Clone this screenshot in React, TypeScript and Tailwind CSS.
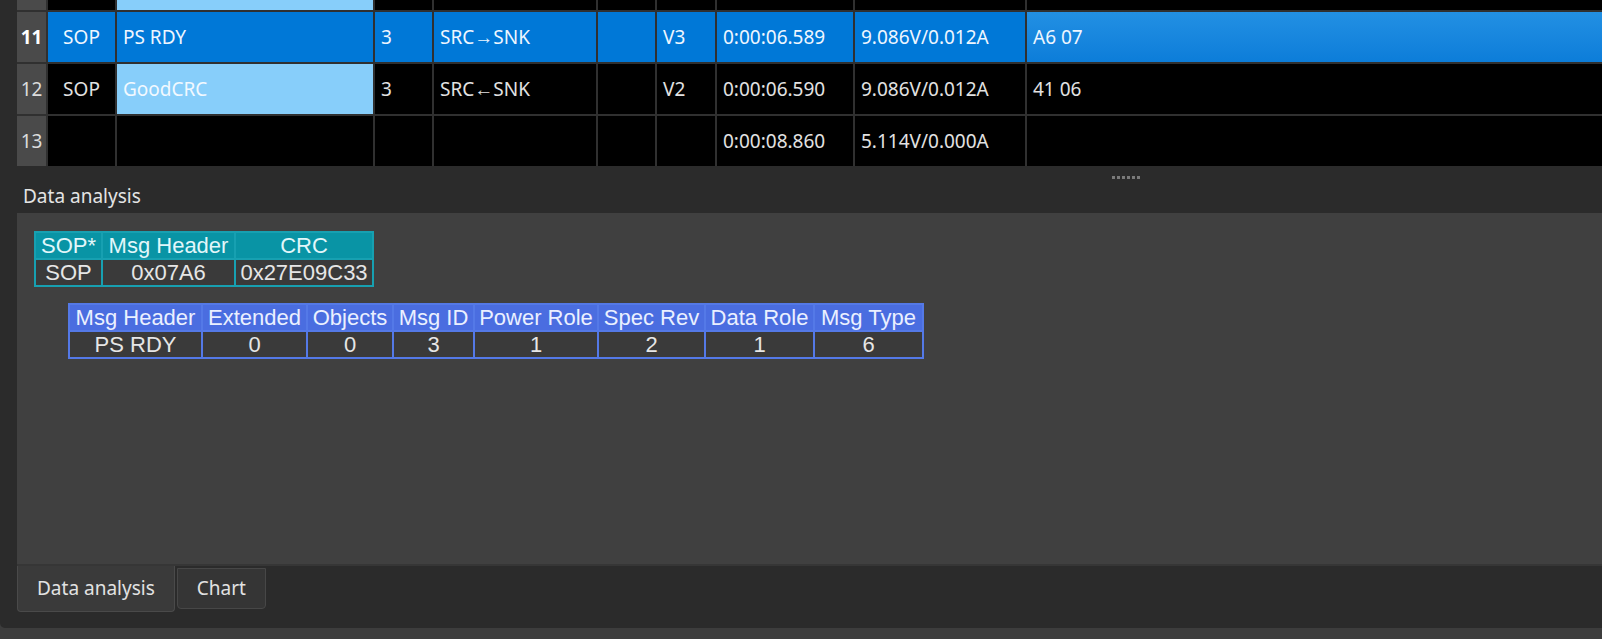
import React from 'react'

interface Col {
  w: string
  center?: boolean
}

const COLS: Col[] = [
  { w: 'w-[67px]', center: true },
  { w: 'w-[256px]' },
  { w: 'w-[57px]' },
  { w: 'w-[162px]' },
  { w: 'w-[57px]' },
  { w: 'w-[58px]' },
  { w: 'w-[136px]' },
  { w: 'w-[170px]' },
  { w: 'flex-1' },
]

interface Row {
  id: string
  cells: string[]
  selected?: boolean
}

const ROWS: Row[] = [
  {
    id: '11',
    selected: true,
    cells: ['SOP', 'PS RDY', '3', 'SRC→SNK', '', 'V3', '0:00:06.589', '9.086V/0.012A', 'A6 07'],
  },
  {
    id: '12',
    cells: ['SOP', 'GoodCRC', '3', 'SRC←SNK', '', 'V2', '0:00:06.590', '9.086V/0.012A', '41 06'],
  },
  {
    id: '13',
    cells: ['', '', '', '', '', '', '0:00:08.860', '5.114V/0.000A', ''],
  },
]

const HEADER_COLS = ['Msg Header', 'Extended', 'Objects', 'Msg ID', 'Power Role', 'Spec Rev', 'Data Role', 'Msg Type']
const HEADER_VALS = ['PS RDY', '0', '0', '3', '1', '2', '1', '6']

function cellBg(row: Row, i: number) {
  if (row.selected) {
    return i === 8 ? 'bg-gradient-to-b from-[#2290e3] to-[#0c7dd9]' : 'bg-[#0078d7]'
  }
  return i === 1 && row.cells[1] ? 'bg-[#87cefa]' : 'bg-black'
}

function PacketTable() {
  return (
    <div className="flex flex-col gap-[2px] bg-[#303030] font-['Noto_Sans',sans-serif] text-[19px]">
      {/* row cut off at the top edge */}
      <div className="flex gap-[2px] h-[10px]">
        <div className="w-[29px] bg-[#4a4a4a]" />
        {COLS.map((c, i) => (
          <div key={i} className={`${c.w} ${i === 1 ? 'bg-[#87cefa]' : 'bg-black'}`} />
        ))}
      </div>

      {ROWS.map((row) => (
        <div key={row.id} className="flex gap-[2px] h-[50px]">
          <div
            className={`w-[29px] bg-[#4a4a4a] flex items-center justify-center ${
              row.selected ? 'font-bold text-white' : 'text-[#dcdcdc]'
            }`}
          >
            {row.id}
          </div>
          {COLS.map((c, i) => (
            <div
              key={i}
              className={`${c.w} ${cellBg(row, i)} flex items-center px-[6px] whitespace-nowrap overflow-hidden ${
                c.center ? 'justify-center' : ''
              } ${row.selected ? 'text-[#eef6ff]' : i === 1 ? 'text-[#f2f9ff]' : 'text-[#e2e2e2]'}`}
            >
              {row.cells[i]}
            </div>
          ))}
        </div>
      ))}
    </div>
  )
}

function SopTable() {
  return (
    <div className="grid grid-cols-[65px_131px_136px] gap-[2px] p-[2px] bg-[#17a0b1] w-max text-center">
      {['SOP*', 'Msg Header', 'CRC'].map((h) => (
        <div key={h} className="bg-[#0994a5] text-[#e2f7fa] leading-[25px]">
          {h}
        </div>
      ))}
      {['SOP', '0x07A6', '0x27E09C33'].map((v) => (
        <div key={v} className="bg-[#3a3a3a] text-[#e6e6e6] leading-[25px]">
          {v}
        </div>
      ))}
    </div>
  )
}

function HeaderTable() {
  return (
    <div className="grid grid-cols-[131px_103px_84px_79px_122px_105px_107px_107px] gap-[2px] p-[2px] bg-[#5479e7] w-max text-center">
      {HEADER_COLS.map((h) => (
        <div key={h} className="bg-[#4a6de0] text-[#eaf0ff] leading-[25px] whitespace-nowrap">
          {h}
        </div>
      ))}
      {HEADER_VALS.map((v, i) => (
        <div key={i} className="bg-[#3a3a3a] text-[#e6e6e6] leading-[25px]">
          {v}
        </div>
      ))}
    </div>
  )
}

export default function App() {
  return (
    <div className="w-[1602px] h-[639px] bg-[#3d3d3d] overflow-hidden">
      <div className="h-[628px] bg-[#2b2b2b] rounded-bl-[5px] pl-[17px] flex flex-col">
        <PacketTable />

        {/* splitter grip */}
        <div className="mt-[10px] ml-[1095px] flex gap-[2px] h-[3px]">
          {[0, 1, 2, 3, 4, 5].map((d) => (
            <span key={d} className="w-[3px] h-[3px] bg-[#7a7a7a]" />
          ))}
        </div>

        <div className="mt-[5px] ml-[6px] h-[24px] leading-[24px] text-[19px] text-[#e4e4e4] font-['Noto_Sans',sans-serif]">
          Data analysis
        </div>

        <div className="mt-[5px] flex-1 bg-[#404040] border-b-2 border-[#363636] pl-[17px] pt-[18px] font-['Liberation_Sans',Arial,sans-serif] text-[22px]">
          <SopTable />
          <div className="mt-[16px] ml-[34px]">
            <HeaderTable />
          </div>
        </div>

        <div className="h-[62px] flex items-start gap-[2px] font-['Noto_Sans',sans-serif] text-[19px] text-[#e2e2e2]">
          <div className="h-[46px] px-[19px] flex items-center bg-[#3a3a3a] border border-t-0 border-[#4a4a4a] rounded-b-[4px]">
            Data analysis
          </div>
          <div className="mt-[2px] h-[41px] px-[19px] flex items-center bg-[#353535] border border-[#474747] rounded-b-[4px]">
            Chart
          </div>
        </div>
      </div>
    </div>
  )
}
